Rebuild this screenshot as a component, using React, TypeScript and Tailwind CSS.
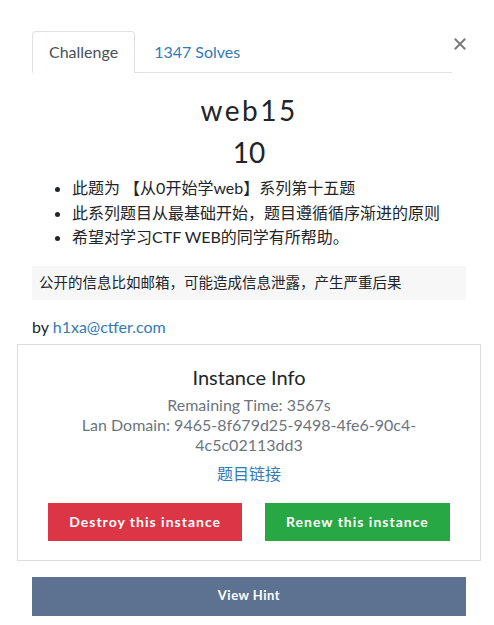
import React from 'react';

const FONT = "font-['Lato','Noto_Sans_CJK_SC',sans-serif]";

// 题目描述列表
const bullets = [
  '此题为 【从0开始学web】系列第十五题',
  '此系列题目从最基础开始，题目遵循循序渐进的原则',
  '希望对学习CTF WEB的同学有所帮助。',
];

function CloseIcon() {
  return (
    <svg width="12" height="12" viewBox="0 0 12 12" className="block">
      <path d="M1.5 1.5 L10.5 10.5 M10.5 1.5 L1.5 10.5" stroke="#7b7b7b" strokeWidth="2" strokeLinecap="square" />
    </svg>
  );
}

export default function App() {
  return (
    <div className={`${FONT} min-h-[625px] bg-white text-[#212529] pl-[32px] pr-[28px] pt-[31px]`}>
      {/* Tabs */}
      <div className="flex items-start">
        <div className="flex flex-1 border-b border-[#dee2e6]">
          <div className="-mb-px h-[42px] px-[16px] flex items-center border border-[#dee2e6] border-b-white rounded-t-[4px] bg-white text-[16px] text-[#495057]">
            Challenge
          </div>
          <div className="h-[41px] ml-[3px] px-[16px] flex items-center text-[16px] text-[#337ab7]">
            1347 Solves
          </div>
        </div>
        <div className="w-[14px] pt-[7px] flex justify-end">
          <CloseIcon />
        </div>
      </div>

      {/* Title */}
      <h3 className="mt-[20px] text-center text-[28px] leading-[34px] font-normal tracking-[2.5px] text-[#212529]">web15</h3>
      <h4 className="mt-[8px] text-center text-[28px] leading-[34px] font-normal text-[#212529]">10</h4>

      {/* Description */}
      <ul className="mt-[7px] pl-[40px] list-disc text-[16px] leading-[24.5px] marker:text-[#212529]">
        {bullets.map((b) => (
          <li key={b}>{b}</li>
        ))}
      </ul>

      <div className="mt-[16px] h-[34px] flex items-center px-[7px] bg-[#f7f7f7] text-[14.5px] text-[#212529]">
        公开的信息比如邮箱，可能造成信息泄露，产生严重后果
      </div>

      <div className="mt-[15px] text-[16px] leading-[24px]">
        by <span className="text-[#337ab7]">h1xa@ctfer.com</span>
      </div>

      {/* Instance Info */}
      <div className="mt-[5px] -mx-[15px] border border-[#dddddd] pt-[20px] pb-[19px] text-center">
        <div className="text-[20px] leading-[24px] text-[#212529]">Instance Info</div>
        <div className="mt-[6px] px-[45px] text-[16px] leading-[20px] text-[#6c757d]">
          <div>Remaining Time: 3567s</div>
          <div>Lan Domain: 9465-8f679d25-9498-4fe6-90c4-4c5c02113dd3</div>
        </div>
        <div className="mt-[7px] text-[16px] leading-[24px] text-[#337ab7]">题目链接</div>
        <div className="mt-[17px] flex justify-center gap-[23px]">
          <button className="h-[38px] px-[21px] bg-[#dc3545] text-white text-[14px] font-bold tracking-[1px]">
            Destroy this instance
          </button>
          <button className="h-[38px] px-[21px] bg-[#28a745] text-white text-[14px] font-bold tracking-[1px]">
            Renew this instance
          </button>
        </div>
      </div>

      {/* Hint */}
      <button className="mt-[16px] w-full h-[39px] bg-[#5c7290] text-white text-[13px] font-bold tracking-[0.5px]">
        View Hint
      </button>
    </div>
  );
}
